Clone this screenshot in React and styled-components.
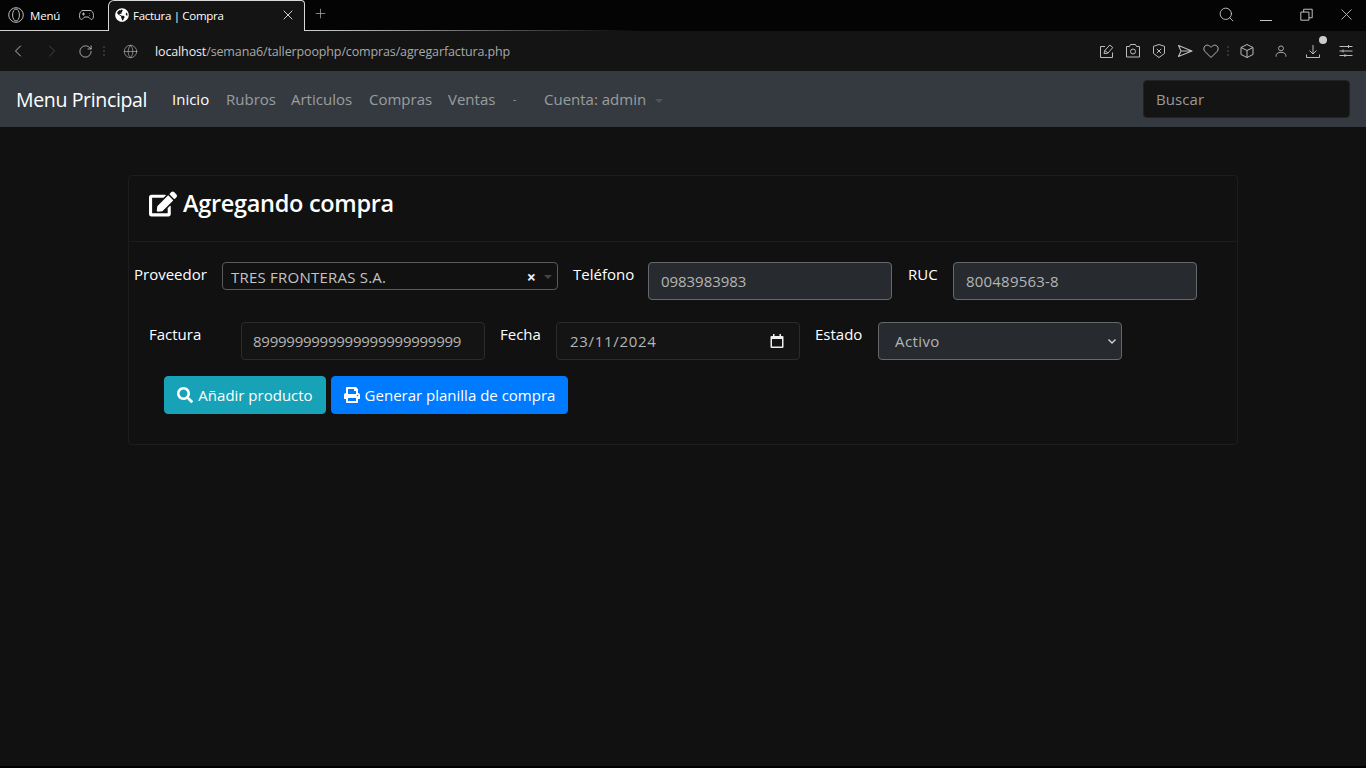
import React from "react";
import styled, { createGlobalStyle } from "styled-components";
import { Search, X, Plus, ChevronLeft, ChevronRight, RotateCw, Globe } from "lucide-react";
import { FaEdit, FaSearch, FaPrint, FaGlobeAmericas } from "react-icons/fa";

const Global = createGlobalStyle`
  html, body { margin: 0; padding: 0; background: #000; }
  body { font-family: "Open Sans", "Noto Sans", sans-serif; }
  * { box-sizing: border-box; }
`;
const Page = styled.div`
  width: 1366px; height: 766px; display: flex; flex-direction: column; background: #111; overflow: hidden;
`;
const TabStrip = styled.div`
  height: 31px; flex: none; display: flex; align-items: stretch; color: #fff;
  background: linear-gradient(90deg, #d0d0d0 305px, transparent 640px) bottom / 100% 1px no-repeat, #040404;
`;
const MenuTab = styled.div`
  width: 108px; display: flex; align-items: center; padding-left: 8px; padding-bottom: 1px; font-size: 11.5px; font-weight: 500; letter-spacing: -0.2px;
  span { margin-left: 6px; }
  svg.pad { margin-left: 19px; color: #bbb; }
`;
const ActiveTab = styled.div`
  width: 197px; height: 31px; background: #141414; border: 1px solid #d8d8d8; border-bottom: none;
  border-radius: 6px 4px 0 0; display: flex; align-items: center; padding: 0 8px 2px 6px;
  font-size: 11.5px; letter-spacing: -0.3px;
  span { margin-left: 4px; flex: 1; }
`;
const NewTab = styled.div`
  width: 30px; display: flex; align-items: center; justify-content: center; padding-bottom: 4px; color: #ccc;
`;
const WindowBtns = styled.div`
  margin-left: auto; display: flex; align-items: center; color: #c4c4c4; padding-bottom: 2px;
`;
const WinBtn = styled.div`
  width: 40px; display: flex; justify-content: center; align-items: center;
`;
const MinLine = styled.div`width: 12px; height: 1px; background: #c4c4c4; margin-top: 12px;`;
const AddrBar = styled.div`
  height: 40px; flex: none; background: #141414; display: flex; align-items: center; color: #bbb;
`;
const NavBtn = styled.div`
  width: ${p => p.$w}px; display: flex; justify-content: center; color: ${p => p.$dim ? "#444" : "#bbb"};
`;
const Dots = styled.div`
  width: 2px; height: 10px; margin: 0 ${p => p.$m}px; flex: none;
  background: repeating-linear-gradient(#333 0 2px, transparent 2px 4px);
`;
const Url = styled.div`
  margin-left: 1px; font-size: 12.5px; color: #a9a9a9; letter-spacing: -0.13px; flex: 1; white-space: nowrap;
  b { font-weight: 400; color: #eee; }
`;
const RightIcons = styled.div`
  display: flex; align-items: center; color: #bbb;
`;
const ToolIcon = styled.div`
  width: ${p => p.$w || 26}px; display: flex; justify-content: center; position: relative;
`;
const Badge = styled.i`
  position: absolute; top: -7px; right: -1px; width: 8px; height: 8px; border-radius: 50%; background: #ccc;
`;
const Navbar = styled.nav`
  height: 56px; flex: none; background: #343a40; display: flex; align-items: center; padding: 0 16px;
`;
const Brand = styled.div`
  font-size: 19.5px; color: #fff; margin-right: 16px; letter-spacing: -0.35px; white-space: nowrap; width: 132px;
`;
const NavLink = styled.a`
  font-size: 15px; color: ${p => p.$active ? "#fff" : "rgba(255,255,255,.5)"};
  padding: 0 8px; white-space: nowrap; width: ${p => p.$w}px; flex: none;
`;
const Dash = styled(NavLink)`
  font-size: 10px; padding-left: 10px;
`;
const Caret = styled.i`
  display: inline-block; margin-left: 9px; vertical-align: 2px; width: 0; height: 0;
  border: 4px solid transparent; border-top-color: rgba(255,255,255,.14); border-bottom: none;
`;
const SearchBox = styled.div`
  margin-left: auto; width: 207px; height: 38px; background: #141414; border: 1px solid #222; border-radius: 4px;
  display: flex; align-items: center; padding-left: 12px; color: #9a9a9a; font-size: 15px; letter-spacing: 0.1px;
`;
const Main = styled.main`
  flex: 1; padding: 48px 128px 0;
`;
const Card = styled.section`
  width: 1110px; height: 270px; border: 1px solid #1d1d1d; border-radius: 4px;
`;
const CardHead = styled.header`
  height: 66px; border-bottom: 1px solid #1d1d1d; display: flex; align-items: center; padding: 0 20px 10px; gap: 6px;
  color: #fff;
`;
const Title = styled.h1`
  margin: 0; font-size: 23.5px; font-weight: 600; letter-spacing: -0.3px; line-height: 1;
`;
const Body = styled.div`
  padding-top: 20px; display: flex; flex-direction: column;
`;
const Row = styled.div`
  display: flex; align-items: flex-start; padding-left: ${p => p.$pad}px; margin-bottom: ${p => p.$mb}px;
`;
const Label = styled.label`
  width: ${p => p.$w}px; margin-left: ${p => p.$ml || 0}px; flex: none; font-size: 15px; line-height: 24px; color: #fff;
`;
const Proveedor = styled.div`
  width: 336px; height: 28px; border: 1px solid #5a5a5a; border-radius: 4px; display: flex; align-items: center;
  padding: 1px 5px 0 8px; font-size: 15px; color: #c4c4c4; letter-spacing: 0.22px;
  span { flex: 1; }
  b { color: #eee; font-size: 16px; margin-right: 8px; font-weight: 700; line-height: 1; }
  i { width: 0; height: 0; border: 4px solid transparent; border-top-color: #444; border-bottom: none; }
`;
const Field = styled.div`
  width: 244px; height: 38px; border-radius: 4px; display: flex; align-items: center; justify-content: space-between;
  padding: 0 ${p => p.$pr || 12}px 0 ${p => p.$pl || 12}px; font-size: 15px; letter-spacing: ${p => p.$ls ?? 0}px; color: #b5b5b5;
  background: ${p => p.$filled ? "#272b2f" : "#141414"};
  border: 1px solid ${p => p.$filled ? "#65696d" : "#2b2b2b"};
`;
const Buttons = styled.div`
  display: flex; gap: 5px; padding-left: 35px;
`;
const Btn = styled.button`
  height: 38px; width: ${p => p.$w}px; border-radius: 4px; border: 1px solid ${p => p.$bg}; background: ${p => p.$bg};
  color: #fff; font: 15px "Open Sans", sans-serif; display: flex; align-items: center; justify-content: center; gap: 5px; padding: 0;
`;

const Svg = ({ size = 16, sw = 1, children }) => (
  <svg width={size} height={size} viewBox="0 0 16 16" fill="none" stroke="currentColor" strokeWidth={sw} strokeLinejoin="round">
    {children}
  </svg>
);
const SnapIcon = () => (
  <Svg><path d="M6 3.500H1.500v11h12V9.500M5 10.500l.8-3 5-5.500 3 2.500-5 5.800zM5.800 7.500l3 2.300" /></Svg>
);
const CameraIcon = () => (
  <Svg><path d="M1.500 3.500h3l1-2h5l1 2h3v10.500h-13z" /><circle cx="8" cy="8.500" r="2.500" /></Svg>
);
const ShieldIcon = () => (
  <Svg><path d="M8 1.500l5.500 1.800v7.200L8 14.500l-5.500-4V3.300z" /><path d="M5.800 5.800l4.400 4.400M10.200 5.800l-4.400 4.400" /></Svg>
);
const SendIcon = () => (
  <Svg sw={1.1}><path d="M1.500 2.500L15 8 1.500 13.500 4 8zM4 8h11" /></Svg>
);
const HeartIcon = () => (
  <Svg><path d="M8 14.500L2 8.500C.5 7 .5 4.500 2 3c1.500-1.300 3.800-1.200 6 1.300C10.200 1.800 12.500 1.700 14 3c1.500 1.500 1.500 4 0 5.500z" /></Svg>
);
const CubeIcon = () => (
  <Svg><path d="M8 1.500l6 3v7l-6 3-6-3v-7zM2 4.500l6 3 6-3M8 7.500v7" /></Svg>
);
const UserIcon = () => (
  <Svg size={14}><circle cx="8" cy="5" r="2.800" /><path d="M2.500 14.500V13c0-2 2-3.500 5.500-3.500s5.500 1.500 5.500 3.500v1.500" /></Svg>
);
const DownIcon = () => (
  <Svg><path d="M8 2v9M4.500 7.500L8 11l3.500-3.500M1.500 11.500v3h13v-3" /></Svg>
);
const SlidersIcon = () => (
  <Svg><path d="M1.500 3.500h13M1.500 8h13M1.500 12.500h13M10.500 2v3M5 6.500v3M7 11v3" /></Svg>
);
const RestoreIcon = () => (
  <Svg size={13} sw={1.2}><path d="M1 5h10v10H1zM4.500 5V1.500H15V12h-4" /></Svg>
);
const PadIcon = () => (
  <svg className="pad" width="15" height="12" viewBox="0 0 15 12" fill="none" stroke="currentColor" strokeWidth="1">
    <path d="M4 1.500h7c2 0 3.500 2 3.500 5 0 2.500-.8 4-2 4-1.500 0-2-2.500-3.500-2.500H6C4.500 8 4 10.500 2.500 10.500c-1.200 0-2-1.500-2-4 0-3 1.500-5 3.500-5z" />
    <path d="M3 5h3M4.500 3.500v3M10.500 4v.5M10.500 6v.5" />
  </svg>
);
const OperaIcon = () => (
  <svg width="16" height="16" viewBox="0 0 16 16" fill="none" stroke="#bbb" strokeWidth="1">
    <circle cx="8" cy="8" r="7.300" /><ellipse cx="8" cy="8" rx="3.400" ry="6" />
  </svg>
);

export default function App() {
  return (
    <Page>
      <Global />
      <TabStrip>
        <MenuTab>
          <OperaIcon /><span>Menú</span>
          <PadIcon />
        </MenuTab>
        <ActiveTab>
          <FaGlobeAmericas size={14} /><span>Factura | Compra</span>
          <X size={16} strokeWidth={1.2} />
        </ActiveTab>
        <NewTab><Plus size={15} strokeWidth={1} /></NewTab>
        <WindowBtns>
          <WinBtn><Search size={17} strokeWidth={1.3} /></WinBtn>
          <WinBtn><MinLine /></WinBtn>
          <WinBtn><RestoreIcon /></WinBtn>
          <WinBtn><X size={19} strokeWidth={1.1} /></WinBtn>
        </WindowBtns>
      </TabStrip>
      <AddrBar>
        <NavBtn $w={36}><ChevronLeft size={20} strokeWidth={1.2} /></NavBtn>
        <NavBtn $w={32} $dim><ChevronRight size={20} strokeWidth={1.2} /></NavBtn>
        <NavBtn $w={34}><RotateCw size={15} strokeWidth={1.4} /></NavBtn>
        <Dots $m={1} />
        <NavBtn $w={48}><Globe size={15} strokeWidth={1} /></NavBtn>
        <Url><b>localhost</b>/semana6/tallerpoophp/compras/agregarfactura.php</Url>
        <RightIcons>
          <ToolIcon><SnapIcon /></ToolIcon>
          <ToolIcon><CameraIcon /></ToolIcon>
          <ToolIcon><ShieldIcon /></ToolIcon>
          <ToolIcon><SendIcon /></ToolIcon>
          <ToolIcon><HeartIcon /></ToolIcon>
          <Dots $m={3} />
          <ToolIcon $w={30}><CubeIcon /></ToolIcon>
          <ToolIcon $w={38}><UserIcon /></ToolIcon>
          <ToolIcon $w={26}><DownIcon /><Badge /></ToolIcon>
          <ToolIcon $w={40}><SlidersIcon /></ToolIcon>
        </RightIcons>
      </AddrBar>
      <Navbar>
        <Brand>Menu Principal</Brand>
        <NavLink $active $w={54}>Inicio</NavLink>
        <NavLink $w={65}>Rubros</NavLink>
        <NavLink $w={78}>Articulos</NavLink>
        <NavLink $w={79}>Compras</NavLink>
        <NavLink $w={63}>Ventas</NavLink>
        <Dash $w={33}>-</Dash>
        <NavLink $w={140}>Cuenta: admin<Caret /></NavLink>
        <SearchBox>Buscar</SearchBox>
      </Navbar>
      <Main>
        <Card>
          <CardHead>
            <FaEdit size={28} />
            <Title>Agregando compra</Title>
          </CardHead>
          <Body>
            <Row $pad={5} $mb={22}>
              <Label $w={88}>Proveedor</Label>
              <Proveedor><span>TRES FRONTERAS S.A.</span><b>×</b><i /></Proveedor>
              <Label $ml={15} $w={75}>Teléfono</Label>
              <Field $filled $ls={-0.05}>0983983983</Field>
              <Label $ml={16} $w={45}>RUC</Label>
              <Field $filled $ls={0.2}>800489563-8</Field>
            </Row>
            <Row $pad={20} $mb={16}>
              <Label $w={92}>Factura</Label>
              <Field $pl={11} $ls={-0.25}>8999999999999999999999999</Field>
              <Label $ml={15} $w={56}>Fecha</Label>
              <Field $pl={13} $pr={15} $ls={0.7}>
                23/11/2024
                <svg width="14" height="14" viewBox="0 0 14 14" fill="#eee">
                  <path d="M3 0h1.500v2h5V0H11v2h1.500A1 1 0 0 1 13.500 3v10a1 1 0 0 1-1 1h-11a1 1 0 0 1-1-1V3a1 1 0 0 1 1-1H3zM2 5v7.500h10V5z" />
                </svg>
              </Field>
              <Label $ml={15} $w={63}>Estado</Label>
              <Field $filled $pl={16} $pr={4} $ls={0.4}>
                Activo
                <svg width="10" height="10" viewBox="0 0 10 10" fill="none" stroke="#ccc" strokeWidth="1.5">
                  <path d="M1.500 3.500L5 7l3.500-3.500" />
                </svg>
              </Field>
            </Row>
            <Buttons>
              <Btn $w={162} $bg="#17a2b8"><FaSearch size={16} />Añadir producto</Btn>
              <Btn $w={237} $bg="#007bff"><FaPrint size={16} />Generar planilla de compra</Btn>
            </Buttons>
          </Body>
        </Card>
      </Main>
    </Page>
  );
}
